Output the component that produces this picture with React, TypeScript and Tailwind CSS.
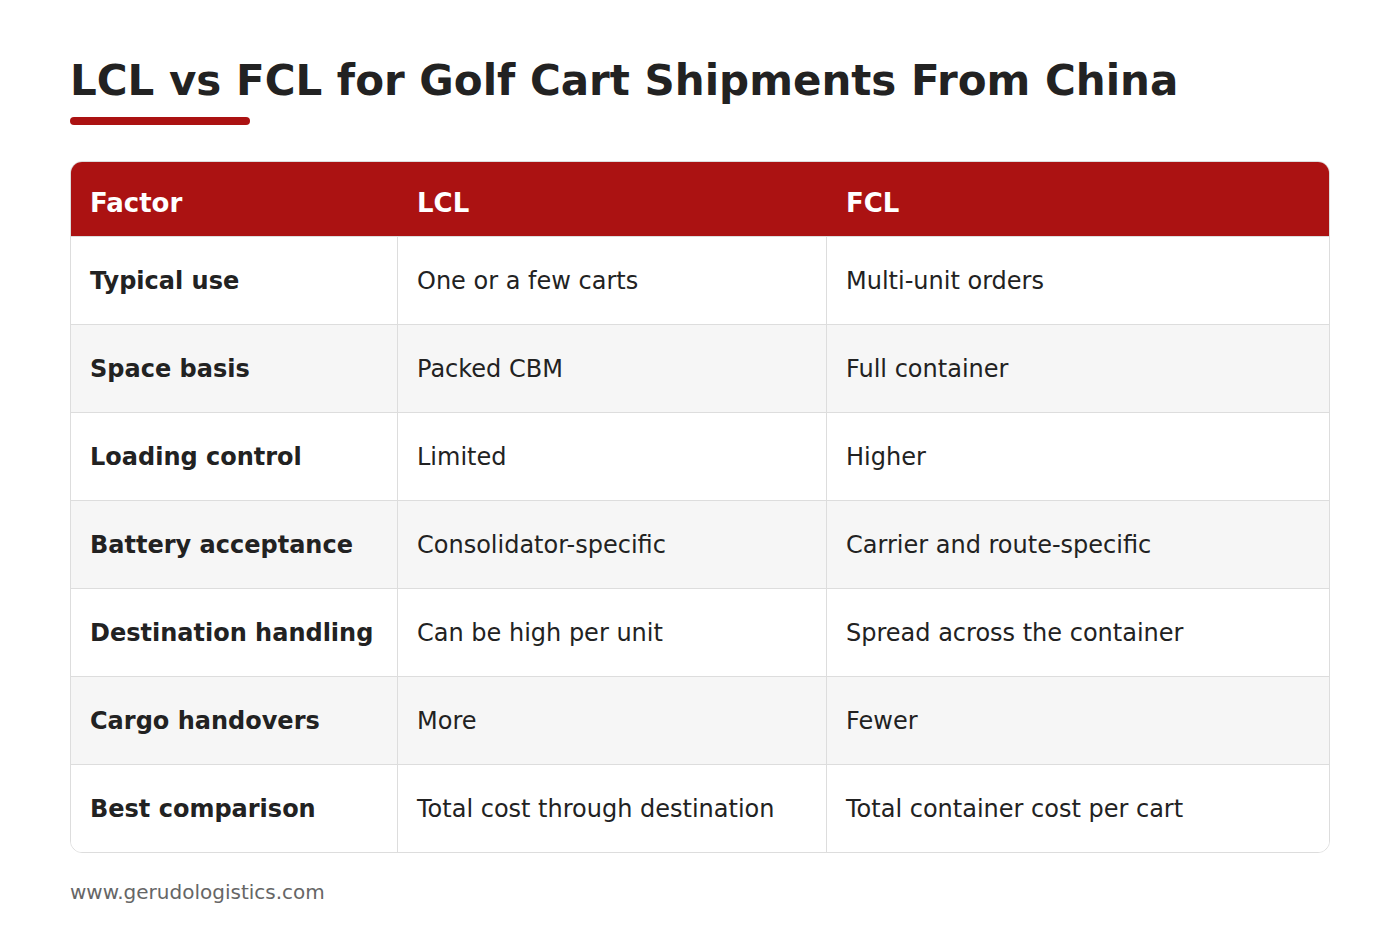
import React from "react";

const rows = [
  ["Typical use", "One or a few carts", "Multi-unit orders"],
  ["Space basis", "Packed CBM", "Full container"],
  ["Loading control", "Limited", "Higher"],
  ["Battery acceptance", "Consolidator-specific", "Carrier and route-specific"],
  ["Destination handling", "Can be high per unit", "Spread across the container"],
  ["Cargo handovers", "More", "Fewer"],
  ["Best comparison", "Total cost through destination", "Total container cost per cart"],
];

const App = () => {
  return (
    <div
      className="min-h-screen bg-white px-[70px] pt-[56px] text-[#222]"
      style={{ fontFamily: '"DejaVu Sans", "Liberation Sans", sans-serif' }}
    >
      <h1 className="text-[42px] font-bold leading-[50px] text-[#222]">
        LCL vs FCL for Golf Cart Shipments From China
      </h1>
      <div className="mt-[11px] h-2 w-[180px] rounded-full bg-[#ab1212]" />

      <div className="mt-[36px] overflow-hidden rounded-[12px] border border-[#dddddd]">
        <table className="w-full table-fixed border-separate border-spacing-0 text-[24px] leading-[28px]">
          <colgroup>
            <col className="w-[327px]" />
            <col className="w-[429px]" />
            <col />
          </colgroup>
          <thead>
            <tr className="bg-[#ab1212] text-left text-[26px] text-white">
              <th className="border-b border-[#dddddd] px-[19px] pt-[27px] pb-[19px] font-bold">
                Factor
              </th>
              <th className="border-b border-[#dddddd] px-[19px] pt-[27px] pb-[19px] font-bold">
                LCL
              </th>
              <th className="border-b border-[#dddddd] px-[19px] pt-[27px] pb-[19px] font-bold">
                FCL
              </th>
            </tr>
          </thead>
          <tbody>
            {rows.map((row, i) => {
              const last = i === rows.length - 1;
              const bg = i % 2 === 1 ? "bg-[#f6f6f6]" : "bg-white";
              const bottom = last ? "" : "border-b border-[#dddddd]";
              return (
                <tr key={row[0]} className={bg}>
                  <td
                    className={`${bottom} border-r border-[#dddddd] px-[19px] pt-[30px] pb-[29px] font-bold`}
                  >
                    {row[0]}
                  </td>
                  <td
                    className={`${bottom} border-r border-[#dddddd] px-[19px] pt-[30px] pb-[29px]`}
                  >
                    {row[1]}
                  </td>
                  <td className={`${bottom} px-[19px] pt-[30px] pb-[29px]`}>
                    {row[2]}
                  </td>
                </tr>
              );
            })}
          </tbody>
        </table>
      </div>

      <p className="mt-[24px] text-[20px] text-[#666666]">
        www.gerudologistics.com
      </p>
    </div>
  );
};

export default App;
